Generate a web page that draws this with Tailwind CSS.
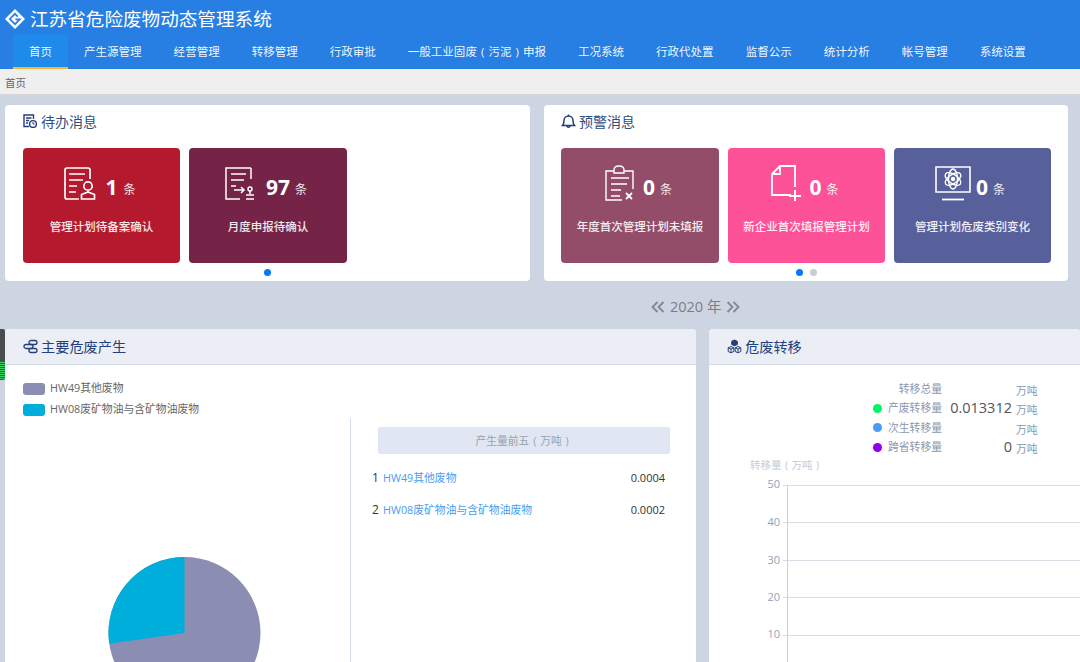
<!DOCTYPE html>
<html lang="zh-CN">
<head>
<meta charset="utf-8">
<title>江苏省危险废物动态管理系统</title>
<script src="https://cdn.jsdelivr.net/npm/@tailwindcss/browser@4"></script>
</head>
<body class="relative w-[1080px] h-[662px] overflow-hidden bg-[#cdd5e2] font-['Open_Sans','Noto_Sans_CJK_SC',sans-serif]">

<header class="h-[69px] bg-[#277fe3] text-white">
  <div class="h-[34px] pl-[5px] pt-[4px] flex items-center gap-[5px]">
    <svg class="w-[20px] h-[20px]" viewBox="0 0 20 20"><path d="M10 0 20 10 10 20 0 10Z" fill="#fff"/><path d="M12.800 7.600 10 4.800 4.800 10 10 15.200 14.800 10.400H10.400" fill="none" stroke="#277fe3" stroke-width="1.700"/></svg>
    <h1 class="text-[18.600px] leading-none font-normal">江苏省危险废物动态管理系统</h1>
  </div>
  <nav class="h-[35px] pl-[13px] flex text-[11.520px] leading-[35px] text-white/95">
    <a class="px-[16px] bg-[#1e8aeb] border-b-2 border-[#f5b82e]">首页</a>
    <a class="px-[16px]">产生源管理</a>
    <a class="px-[16px]">经营管理</a>
    <a class="px-[16px]">转移管理</a>
    <a class="px-[16px]">行政审批</a>
    <a class="px-[16px]">一般工业固废<span class="inline-block w-[1em] text-center">(</span>污泥<span class="inline-block w-[1em] text-center">)</span>申报</a>
    <a class="px-[16px]">工况系统</a>
    <a class="px-[16px]">行政代处置</a>
    <a class="px-[16px]">监督公示</a>
    <a class="px-[16px]">统计分析</a>
    <a class="px-[16px]">帐号管理</a>
    <a class="px-[16px]">系统设置</a>
  </nav>
</header>

<div class="h-[26px] bg-[#efefef] border-b border-[#d6d6d6] pl-[5px] text-[10.500px] leading-[28px] text-[#666]">首页</div>

<section class="flex gap-[14px] pl-[5px] pt-[10px]">
  <div class="w-[525px] h-[176px] bg-white rounded-[4px] px-[18px]">
    <div class="h-[43px] pt-[6px]">
      <div class="flex items-center gap-[4px] h-[20px] text-[14px] text-[#2f4d80]">
        <svg class="w-[14px] h-[14px]" viewBox="0 0 14 14" fill="none" stroke="#243f78" stroke-width="1.400"><path d="M6 12.500H1V1H10.500V5"/><path d="M3 4H8.500M3 6.500H6M3 9H5"/><circle cx="10" cy="10" r="3.400"/><path d="M10 8V10H11.600" stroke-width="1"/></svg>
        待办消息
      </div>
    </div>
    <div class="flex gap-[9px]">
      <div class="w-[157px] h-[115px] rounded-[4px] bg-[#b5192d] text-white flex flex-col items-center">
        <div class="h-[65px] pt-[19px] pr-[3px] flex items-start">
          <svg class="w-[32px] h-[33px]" viewBox="0 0 32 33" fill="none" stroke="#fff" stroke-width="1.700"><path d="M15 32H3Q1 32 1 30V3Q1 1 3 1H24Q26 1 26 3V12"/><path d="M5 7H21M5 13H19M5 19H13M5 25H12"/><circle cx="24" cy="19" r="4.200"/><path d="M24 23.500V25L30.500 27.500V32H17.500V27.500L24 25"/></svg>
          <b class="ml-[9px] mt-[6px] text-[21px] leading-[28px]">1</b>
          <span class="ml-[6px] mt-[13px] text-[12px] leading-[20px] text-white/90">条</span>
        </div>
        <p class="mt-[5px] text-[11.500px] leading-[18px] font-medium text-white/90">管理计划待备案确认</p>
      </div>
      <div class="w-[158px] h-[115px] rounded-[4px] bg-[#752347] text-white flex flex-col items-center">
        <div class="h-[65px] pt-[19px] pr-[4px] flex items-start">
          <svg class="w-[30px] h-[33px]" viewBox="0 0 30 33" fill="none" stroke="#fff" stroke-width="1.500"><path d="M26 1H1V32H15"/><path d="M26 1V12"/><path d="M6 7H21M6 13H19M6 19H11"/><path d="M9 23H19M16 20 19 23 16 26"/><circle cx="25" cy="22" r="2"/><path d="M25 24V27M21 28H29M21 32H29"/></svg>
          <b class="ml-[11px] mt-[6px] text-[21px] leading-[28px]">97</b>
          <span class="ml-[5px] mt-[13px] text-[12px] leading-[20px] text-white/90">条</span>
        </div>
        <p class="mt-[5px] text-[11.500px] leading-[18px] font-medium text-white/90">月度申报待确认</p>
      </div>
    </div>
    <div class="flex justify-center gap-[7px] pt-[6px]"><i class="w-[7px] h-[7px] rounded-full bg-[#007aff]"></i></div>
  </div>

  <div class="w-[524px] h-[176px] bg-white rounded-[4px] px-[17px]">
    <div class="h-[43px] pt-[6px]">
      <div class="flex items-center gap-[3px] h-[20px] text-[14px] text-[#2f4d80]">
        <svg class="w-[15px] h-[15px]" viewBox="0 0 15 15" fill="none" stroke="#243f78" stroke-width="1.500"><path d="M1.500 11.500H13.500C12 10 12 8.500 12 6.500 12 4 10 2 7.500 2 5 2 3 4 3 6.500 3 8.500 3 10 1.500 11.500Z"/><path d="M7.500 .5V2M5.800 12A1.800 1.800 0 0 0 9.200 12"/></svg>
        预警消息
      </div>
    </div>
    <div class="flex gap-[9px]">
      <div class="w-[158px] h-[115px] rounded-[4px] bg-[#934d68] text-white flex flex-col items-center">
        <div class="h-[65px] pt-[17px] pr-[3px] flex items-start">
          <svg class="w-[30px] h-[36px]" viewBox="0 0 30 36" fill="none" stroke="#fff" stroke-width="1.400"><path d="M17 35H1V6H9M19 6H28V24"/><path d="M9 8V5Q9 1 14 1 19 1 19 5V8Z"/><path d="M6 13H24M6 19H22M6 25H16M6 31H15"/><path d="M21 28 27 34M27 28 21 34" stroke-width="1.800"/></svg>
          <b class="ml-[8px] mt-[8px] text-[21px] leading-[28px]">0</b>
          <span class="ml-[5px] mt-[15px] text-[12px] leading-[20px] text-white/90">条</span>
        </div>
        <p class="mt-[5px] text-[11.500px] leading-[18px] font-medium text-white/90">年度首次管理计划未填报</p>
      </div>
      <div class="w-[157px] h-[115px] rounded-[4px] bg-[#fd5298] text-white flex flex-col items-center">
        <div class="h-[65px] pt-[17px] pr-[3px] flex items-start">
          <svg class="w-[30px] h-[36px]" viewBox="0 0 30 36" fill="none" stroke="#fff" stroke-width="1.800"><path d="M20 30H1V9L9 1H24V22"/><path d="M1 9H9V1"/><path d="M18 31H30M24 25V36" stroke-width="2"/></svg>
          <b class="ml-[8px] mt-[8px] text-[21px] leading-[28px]">0</b>
          <span class="ml-[5px] mt-[15px] text-[12px] leading-[20px] text-white/90">条</span>
        </div>
        <p class="mt-[5px] text-[11.500px] leading-[18px] font-medium text-white/90">新企业首次填报管理计划</p>
      </div>
      <div class="w-[157px] h-[115px] rounded-[4px] bg-[#57609a] text-white flex flex-col items-center">
        <div class="h-[65px] pt-[18px] pr-[5px] flex items-start">
          <svg class="w-[36px] h-[35px]" viewBox="0 0 36 35" fill="none" stroke="#fff" stroke-width="1.400"><path d="M1 1H35V26H1Z" stroke-width="1.600"/><ellipse cx="18" cy="13" rx="9" ry="4.500" transform="rotate(35 18 13)"/><ellipse cx="18" cy="13" rx="9" ry="4.500" transform="rotate(-35 18 13)"/><ellipse cx="18" cy="13" rx="4.500" ry="10"/><circle cx="18" cy="13" r="1.500" fill="#fff"/><path d="M7 33.500H29" stroke-width="1.800"/></svg>
          <b class="ml-[5px] mt-[7px] text-[21px] leading-[28px]">0</b>
          <span class="ml-[5px] mt-[14px] text-[12px] leading-[20px] text-white/90">条</span>
        </div>
        <p class="mt-[5px] text-[11.500px] leading-[18px] font-medium text-white/90">管理计划危废类别变化</p>
      </div>
    </div>
    <div class="flex justify-center gap-[7px] pt-[6px]"><i class="w-[7px] h-[7px] rounded-full bg-[#007aff]"></i><i class="w-[7px] h-[7px] rounded-full bg-[#c8ccd4]"></i></div>
  </div>
</section>

<div class="h-[48px] pl-[651px] pt-[4px] flex items-center text-[14.500px] text-[#7b8087]">
  <svg class="w-[14px] h-[12px]" viewBox="0 0 14 12" fill="none" stroke="#83888f" stroke-width="1.800"><path d="M6.500 1 1.500 6 6.500 11M12.500 1 7.500 6 12.500 11"/></svg>
  <span class="mx-[5px]">2020 年</span>
  <svg class="w-[14px] h-[12px]" viewBox="0 0 14 12" fill="none" stroke="#83888f" stroke-width="1.800"><path d="M1.500 1 6.500 6 1.500 11M7.500 1 12.500 6 7.500 11"/></svg>
</div>

<section class="flex gap-[13px] pl-[5px]">
  <div class="w-[691px] h-[333px] overflow-hidden shrink-0 bg-white rounded-t-[4px]">
    <div class="h-[36px] bg-[#eceef5] border-b border-[#d5dcea] rounded-t-[4px] pl-[18px] flex items-center gap-[3px] text-[14.200px] text-[#233f7c]">
      <svg class="w-[15px] h-[15px]" viewBox="0 0 15 15" fill="none" stroke="#243f78" stroke-width="1.300"><rect x="6" y="1.500" width="8" height="4" rx="2"/><rect x="1" y="5.500" width="9" height="4" rx="2"/><rect x="6" y="9.500" width="8" height="4" rx="2"/></svg>
      主要危废产生
    </div>
    <div class="pl-[18px] pt-[18px] h-[53px] text-[10.800px] text-[#666]">
      <div class="h-[21px] flex items-start gap-[5px]"><i class="w-[22px] h-[12px] rounded-[3px] bg-[#8c8db2]"></i><span class="leading-[10px]">HW49其他废物</span></div>
      <div class="h-[12px] flex items-start gap-[5px]"><i class="w-[22px] h-[12px] rounded-[3px] bg-[#00aedc]"></i><span class="leading-[10px]">HW08废矿物油与含矿物油废物</span></div>
    </div>
    <div class="flex">
      <div class="w-[345px] h-[244px] overflow-hidden border-r border-[#d5dcea] box-content">
        <svg class="w-[345px] h-[300px]" viewBox="0 0 345 300"><circle cx="179.500" cy="215" r="76" fill="#8c8db2"/><path d="M179.500 215V139A76 76 0 0 0 104.200 225.700Z" fill="#00aedc"/></svg>
      </div>
      <div class="flex-1 pl-[21px] pr-[31px] pt-[9px]">
        <div class="ml-[6px] -mr-[5px] h-[27px] pt-[1px] rounded-[2px] bg-[#e1e7f2] flex items-center justify-center text-[10.800px] text-[#98a2b0]">产生量前五<span class="inline-block w-[1em] text-center">(</span>万吨<span class="inline-block w-[1em] text-center">)</span></div>
        <div class="mt-[8px] h-[32px] flex items-center text-[11px]"><span class="w-[11px] text-[#333] text-[12px]">1</span><a class="text-[#4a9cf0] text-[10.800px]">HW49其他废物</a><span class="ml-auto text-[#333]">0.0004</span></div>
        <div class="h-[32px] flex items-center text-[11px]"><span class="w-[11px] text-[#333] text-[12px]">2</span><a class="text-[#4a9cf0] text-[10.800px]">HW08废矿物油与含矿物油废物</a><span class="ml-auto text-[#333]">0.0002</span></div>
      </div>
    </div>
  </div>

  <div class="w-[371px] h-[333px] overflow-hidden shrink-0 bg-white rounded-t-[4px]">
    <div class="h-[36px] bg-[#eceef5] border-b border-[#d5dcea] rounded-t-[4px] pl-[18px] flex items-center gap-[3px] text-[14.200px] text-[#233f7c]">
      <svg class="w-[15px] h-[15px]" viewBox="0 0 15 15" fill="#243f78" stroke="#243f78" stroke-width="1"><path d="M7.500 1 10.300 2.300V5.500L7.500 6.800 4.700 5.500V2.300Z"/><path d="M4 7.500 6.800 8.800V12.500L4 13.800 1.200 12.500V8.800Z" fill="none"/><path d="M11 7.500 13.800 8.800V12.500L11 13.800 8.200 12.500V8.800Z" fill="none"/><path d="M1.200 8.800 4 10.100 6.800 8.800M8.200 8.800 11 10.100 13.800 8.800M4 10.100V13.800M11 10.100V13.800" fill="none"/></svg>
      危废转移
    </div>
    <div class="pt-[14px] h-[92px] text-[10.800px] text-[#8a98ad]">
      <div class="h-[19.500px] flex items-center"><span class="w-[233px] text-right">转移总量</span><span class="w-[70px]"></span><span class="ml-[4px] mt-[4px]">万吨</span></div>
      <div class="h-[19.500px] flex items-center"><span class="w-[233px] flex justify-end items-center"><i class="w-[9px] h-[9px] rounded-full bg-[#00f560] mr-[6px]"></i>产废转移量</span><span class="w-[70px] text-right text-[14.500px] text-[#4f5660]">0.013312</span><span class="ml-[4px] mt-[4px]">万吨</span></div>
      <div class="h-[19.500px] flex items-center"><span class="w-[233px] flex justify-end items-center"><i class="w-[9px] h-[9px] rounded-full bg-[#4a9af5] mr-[6px]"></i>次生转移量</span><span class="w-[70px]"></span><span class="ml-[4px] mt-[4px]">万吨</span></div>
      <div class="h-[19.500px] flex items-center"><span class="w-[233px] flex justify-end items-center"><i class="w-[9px] h-[9px] rounded-full bg-[#8f00f0] mr-[6px]"></i>跨省转移量</span><span class="w-[70px] text-right text-[14.500px] text-[#4f5660]">0</span><span class="ml-[4px] mt-[4px]">万吨</span></div>
    </div>
    <svg class="w-[371px] h-[205px]" viewBox="709 457 371 205">
      <text x="750" y="469" font-size="10.500" fill="#c3cddc">转移量<tspan dx="3.500">(</tspan><tspan dx="3.500">万吨</tspan><tspan dx="3.500">)</tspan></text>
      <g stroke="#d9dee6" stroke-width="1"><path d="M783 485.500H1080M783 522.500H1080M783 560.500H1080M783 597.500H1080M783 635.500H1080"/></g>
      <path d="M787.500 485V662" stroke="#c8d2e2" stroke-width="1"/>
      <g font-size="11" fill="#8fa2bd" text-anchor="end"><text x="780" y="488">50</text><text x="780" y="526">40</text><text x="780" y="564">30</text><text x="780" y="601">20</text><text x="780" y="638">10</text></g>
    </svg>
  </div>
</section>

<div class="absolute left-0 top-[329px] w-[5px] h-[51px] rounded-r-[2px] bg-[#4a4d50] overflow-hidden flex items-end">
  <svg class="w-[5px] h-[18px]" viewBox="0 0 5 18"><path d="M0 .5H5M0 2.500H5M0 4.500H5M0 6.500H5M0 8.500H5M0 10.500H5M0 12.500H5M0 14.500H5M0 16.500H5" stroke="#38cf66" stroke-width="1"/></svg>
</div>
</body>
</html>
